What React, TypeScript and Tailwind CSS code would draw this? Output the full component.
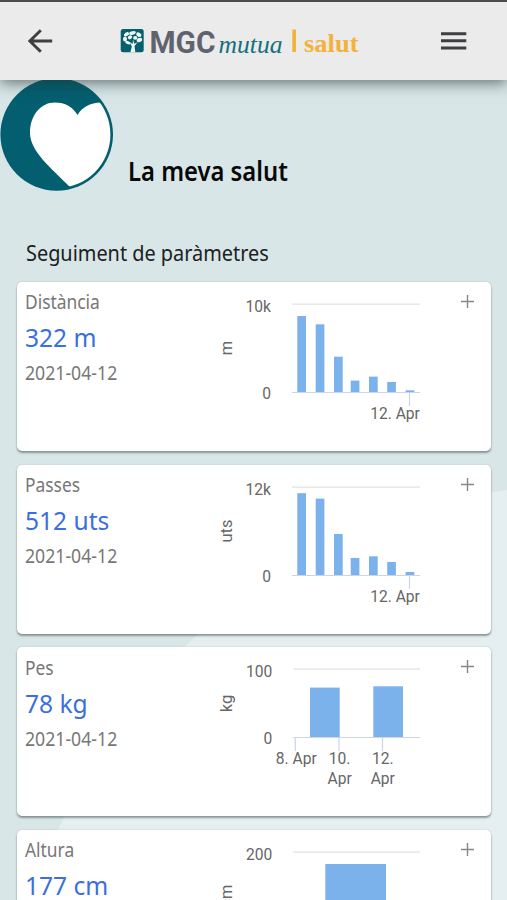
import React from 'react';

interface Bar {
  x: number;
  top: number;
}

interface AxisLabel {
  x: number;
  lines: string[];
  anchor?: 'middle' | 'end';
}

interface Chart {
  max: string;
  unit: string;
  unitY: number;
  left: number;
  labelX: number;
  axisY: number;
  barWidth: number;
  bars: Bar[];
  ticks: number[];
  labels: AxisLabel[];
}

interface Metric {
  title: string;
  value: string;
  date: string;
  chart: Chart;
}

const metrics: Metric[] = [
  {
    title: 'Distància',
    value: '322 m',
    date: '2021-04-12',
    chart: {
      max: '10k',
      unit: 'm',
      unitY: 66,
      left: 82,
      labelX: 61,
      axisY: 110.5,
      barWidth: 8.7,
      bars: [
        { x: 87.3, top: 34 },
        { x: 105.7, top: 42.3 },
        { x: 124, top: 74.7 },
        { x: 140.7, top: 98.6 },
        { x: 159, top: 94.6 },
        { x: 177.2, top: 100 },
        { x: 195.6, top: 108.3 },
      ],
      ticks: [199.5],
      labels: [{ x: 209.9, lines: ['12. Apr'], anchor: 'end' }],
    },
  },
  {
    title: 'Passes',
    value: '512 uts',
    date: '2021-04-12',
    chart: {
      max: '12k',
      unit: 'uts',
      unitY: 66,
      left: 82,
      labelX: 61,
      axisY: 110.5,
      barWidth: 8.7,
      bars: [
        { x: 87.3, top: 28.2 },
        { x: 105.7, top: 33.6 },
        { x: 124, top: 69 },
        { x: 140.7, top: 93 },
        { x: 159, top: 91.3 },
        { x: 177.2, top: 97 },
        { x: 195.6, top: 107 },
      ],
      ticks: [199.5],
      labels: [{ x: 209.9, lines: ['12. Apr'], anchor: 'end' }],
    },
  },
  {
    title: 'Pes',
    value: '78 kg',
    date: '2021-04-12',
    chart: {
      max: '100',
      unit: 'kg',
      unitY: 56.5,
      left: 83.3,
      labelX: 62.3,
      axisY: 90.5,
      barWidth: 29.7,
      bars: [
        { x: 100, top: 40.6 },
        { x: 163.3, top: 39.3 },
      ],
      ticks: [85.3, 129, 172.5],
      labels: [
        { x: 86.3, lines: ['8. Apr'] },
        { x: 129.6, lines: ['10.', 'Apr'] },
        { x: 172.8, lines: ['12.', 'Apr'] },
      ],
    },
  },
  {
    title: 'Altura',
    value: '177 cm',
    date: '2021-04-12',
    chart: {
      max: '200',
      unit: 'cm',
      unitY: 66,
      left: 83.3,
      labelX: 62.3,
      axisY: 110.5,
      barWidth: 60.7,
      bars: [{ x: 115.3, top: 34 }],
      ticks: [145.5],
      labels: [{ x: 145.5, lines: ['12. Apr'] }],
    },
  },
];

const Logo: React.FC = () => (
  <svg width="242" height="34" viewBox="0 0 242 34" className="block overflow-visible">
    <rect x="0.7" y="5" width="23" height="23.3" rx="2.5" fill="#05606c" />
    <g fill="#eef5f4">
      <ellipse cx="12.5" cy="9" rx="3.4" ry="1.8" transform="rotate(-15 12.5 9)" />
      <ellipse cx="6.5" cy="10.3" rx="2.8" ry="1.8" transform="rotate(-30 6.5 10.3)" />
      <ellipse cx="18.8" cy="10.7" rx="2.8" ry="2" transform="rotate(30 18.8 10.7)" />
      <ellipse cx="5" cy="15" rx="2" ry="2.5" />
      <ellipse cx="19.4" cy="16" rx="2.8" ry="2" transform="rotate(-20 19.4 16)" />
      <ellipse cx="10" cy="13.3" rx="2.3" ry="1.8" transform="rotate(-35 10 13.3)" />
      <ellipse cx="15.2" cy="13.9" rx="2.1" ry="1.8" />
      <ellipse cx="7.8" cy="18.6" rx="2.7" ry="1.5" transform="rotate(20 7.8 18.6)" />
      <path d="M10.4 28.3 11.8 22.5 9.5 18l3.2 2 .3-4.5 1.3 4.2 3.3-1.4-3.1 3.6.8 6.4z" />
    </g>
    <text x="29.5" y="28.5" fontSize="31.5" textLength="66" lengthAdjust="spacingAndGlyphs" fill="#5f636d" className="font-[Roboto,sans-serif] font-bold">MGC</text>
    <text x="98.5" y="28.5" fontSize="26" textLength="64" lengthAdjust="spacingAndGlyphs" fill="#14707d" className="font-['Liberation_Serif',serif] italic">mutua</text>
    <rect x="172.3" y="5.5" width="3.7" height="22.5" fill="#f2b23c" />
    <text x="184" y="28.2" fontSize="26" textLength="54.5" lengthAdjust="spacingAndGlyphs" fill="#f2b23c" className="font-['Liberation_Serif',serif] font-bold">salut</text>
  </svg>
);

const BarChart: React.FC<{ chart: Chart }> = ({ chart }) => {
  const { axisY } = chart;
  return (
    <svg width="220" height="169" viewBox="0 0 220 169" className="block shrink-0 font-[Roboto,sans-serif]" fontSize="15.6" fill="#666">
      <path d={`M${chart.left} 22.2H210`} stroke="#e2e2e2" strokeWidth="1.3" />
      {chart.bars.map(bar => (
        <rect key={bar.x} x={bar.x} y={bar.top} width={chart.barWidth} height={axisY - bar.top} fill="#7cb2eb" />
      ))}
      <path d={`M${chart.left} ${axisY}H210`} stroke="#ccd4ea" strokeWidth="1.2" />
      {chart.ticks.map(x => (
        <path key={x} d={`M${x} ${axisY}V${axisY + 13.5}`} stroke="#ccd4ea" strokeWidth="1.2" />
      ))}
      <text x={chart.labelX} y="29.8" textAnchor="end">{chart.max}</text>
      <text x={chart.labelX} y={axisY + 6.4} textAnchor="end">0</text>
      <text transform={`translate(21.9 ${chart.unitY}) rotate(-90)`} textAnchor="middle" fontSize="16.5">{chart.unit}</text>
      {chart.labels.map(label => (
        <text key={label.x} y={axisY + 26.2} textAnchor={label.anchor ?? 'middle'}>
          {label.lines.map((line, i) => (
            <tspan key={line} x={label.x} dy={i * 19.8}>{line}</tspan>
          ))}
        </text>
      ))}
    </svg>
  );
};

const MetricCard: React.FC<{ metric: Metric }> = ({ metric }) => (
  <div className="flex h-[169px] shrink-0 rounded-[5px] bg-white shadow-[0_2px_2px_rgba(60,75,75,0.5),0_0_2px_rgba(60,75,75,0.2)]">
    <div className="w-[193px] shrink-0 pl-2 pt-[2.4px] whitespace-nowrap text-[19px] text-[#777]">
      <p className="origin-left scale-x-[0.915] leading-9">{metric.title}</p>
      <p className="origin-left scale-x-[0.945] text-[26px] leading-[34px] text-[#3b6fe0]">{metric.value}</p>
      <p className="origin-left scale-x-[0.93] leading-[39px]">{metric.date}</p>
    </div>
    <BarChart chart={metric.chart} />
    <button aria-label="+" className="ml-auto mr-[17px] mt-[13px] h-[13px] w-[13px]">
      <svg width="13" height="13" viewBox="0 0 13 13" stroke="#888" strokeWidth="1.4" className="block">
        <path d="M6.5 0v13M0 6.5h13" />
      </svg>
    </button>
  </div>
);

export default function App() {
  return (
    <div className="relative isolate flex h-[900px] w-full flex-col overflow-hidden bg-[#d8e6e7] font-['Noto_Sans',sans-serif]">
      <svg width="507" height="900" className="absolute inset-0 -z-10">
        <circle cx="583" cy="1057" r="572" fill="#e5eef0" />
      </svg>

      <header className="z-10 flex h-20 shrink-0 items-center border-t-2 border-[#4d4a4b] bg-[#ebebeb] shadow-[0_3px_14px_rgba(30,50,50,0.65)]">
        <button className="ml-7">
          <svg width="25" height="24" viewBox="0 0 25 24" fill="none" stroke="#3f3f41" strokeWidth="2.9" className="block">
            <path d="M12.8 1.2 1.9 12l10.9 10.8M2 12h22.2" />
          </svg>
        </button>
        <div className="ml-[67px]">
          <Logo />
        </div>
        <button className="ml-[74px]">
          <svg width="34" height="20" viewBox="0 0 34 20" stroke="#3f3f41" strokeWidth="3" className="block">
            <path d="M5 2.7h25.3M5 9.8h25.3M5 16.9h25.3" />
          </svg>
        </button>
      </header>

      <div className="flex h-[111px] shrink-0">
        <svg width="114" height="111" viewBox="0 0 114 111" className="block shrink-0">
          <defs>
            <clipPath id="inner">
              <circle cx="56.7" cy="54.5" r="53.7" />
            </clipPath>
          </defs>
          <circle cx="56.7" cy="54.5" r="56.3" fill="#035e6f" />
          <path
            d="M77.5 35C73 27 65 22.5 55 22.5C40 22.5 30 36 30 53C30 71 51 88 70 107L114 107V22.5H101C90 23 82 27 77.5 35Z"
            fill="#fff"
            clipPath="url(#inner)"
          />
        </svg>
        <h1 className="ml-[13.5px] mt-[70px] origin-left scale-x-[0.882] whitespace-nowrap text-[27px] font-semibold leading-[42px] text-[#080808]">
          La meva salut
        </h1>
      </div>

      <h2 className="ml-[26px] mt-[43px] h-12 shrink-0 origin-left scale-x-[0.947] whitespace-nowrap text-[21px] leading-[38px] text-[#1b2020]">
        Seguiment de paràmetres
      </h2>

      <main className="flex flex-col gap-[13.7px] pl-[17px] pr-4">
        {metrics.map(metric => (
          <MetricCard key={metric.title} metric={metric} />
        ))}
      </main>
    </div>
  );
}
